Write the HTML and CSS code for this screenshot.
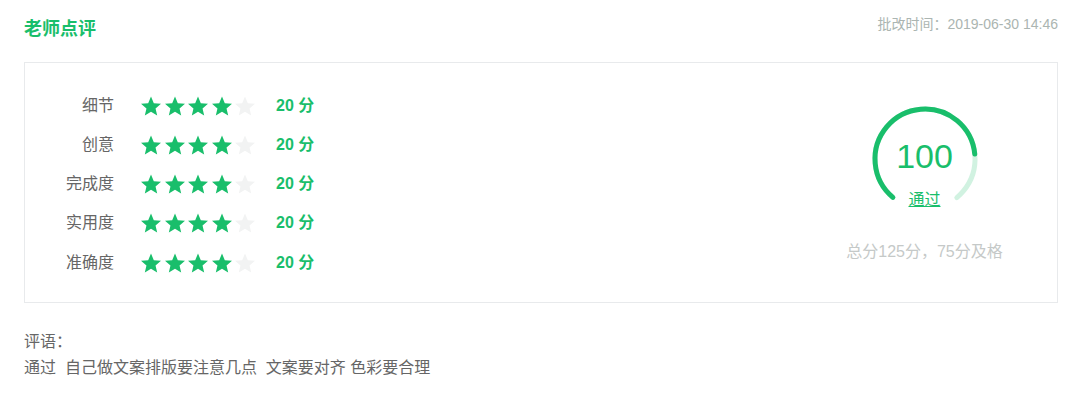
FILE: index.html
```html
<!DOCTYPE html>
<html lang="zh-CN">
<head>
<meta charset="utf-8">
<title>老师点评</title>
<link rel="stylesheet" href="styles.css">
</head>
<body>
<div class="page">
  <div class="header">
    <div class="title">老师点评</div>
    <div class="time">批改时间：2019-06-30 14:46</div>
  </div>
  <div class="panel">
    <div class="ratings">
      <div class="row">
        <span class="label">细节</span>
        <span class="stars">
          <svg class="star on" viewBox="2 1.5 20 20"><path d="M12 17.27L18.18 21l-1.64-7.03L22 9.24l-7.19-.61L12 2 9.19 8.63 2 9.24l5.46 4.73L5.82 21z"/></svg>
          <svg class="star on" viewBox="2 1.5 20 20"><path d="M12 17.27L18.18 21l-1.64-7.03L22 9.24l-7.19-.61L12 2 9.19 8.63 2 9.24l5.46 4.73L5.82 21z"/></svg>
          <svg class="star on" viewBox="2 1.5 20 20"><path d="M12 17.27L18.18 21l-1.64-7.03L22 9.24l-7.19-.61L12 2 9.19 8.63 2 9.24l5.46 4.73L5.82 21z"/></svg>
          <svg class="star on" viewBox="2 1.5 20 20"><path d="M12 17.27L18.18 21l-1.64-7.03L22 9.24l-7.19-.61L12 2 9.19 8.63 2 9.24l5.46 4.73L5.82 21z"/></svg>
          <svg class="star off" viewBox="2 1.5 20 20"><path d="M12 17.27L18.18 21l-1.64-7.03L22 9.24l-7.19-.61L12 2 9.19 8.63 2 9.24l5.46 4.73L5.82 21z"/></svg>
        </span>
        <span class="score">20 分</span>
      </div>
      <div class="row">
        <span class="label">创意</span>
        <span class="stars">
          <svg class="star on" viewBox="2 1.5 20 20"><path d="M12 17.27L18.18 21l-1.64-7.03L22 9.24l-7.19-.61L12 2 9.19 8.63 2 9.24l5.46 4.73L5.82 21z"/></svg>
          <svg class="star on" viewBox="2 1.5 20 20"><path d="M12 17.27L18.18 21l-1.64-7.03L22 9.24l-7.19-.61L12 2 9.19 8.63 2 9.24l5.46 4.73L5.82 21z"/></svg>
          <svg class="star on" viewBox="2 1.5 20 20"><path d="M12 17.27L18.18 21l-1.64-7.03L22 9.24l-7.19-.61L12 2 9.19 8.63 2 9.24l5.46 4.73L5.82 21z"/></svg>
          <svg class="star on" viewBox="2 1.5 20 20"><path d="M12 17.27L18.18 21l-1.64-7.03L22 9.24l-7.19-.61L12 2 9.19 8.63 2 9.24l5.46 4.73L5.82 21z"/></svg>
          <svg class="star off" viewBox="2 1.5 20 20"><path d="M12 17.27L18.18 21l-1.64-7.03L22 9.24l-7.19-.61L12 2 9.19 8.63 2 9.24l5.46 4.73L5.82 21z"/></svg>
        </span>
        <span class="score">20 分</span>
      </div>
      <div class="row">
        <span class="label">完成度</span>
        <span class="stars">
          <svg class="star on" viewBox="2 1.5 20 20"><path d="M12 17.27L18.18 21l-1.64-7.03L22 9.24l-7.19-.61L12 2 9.19 8.63 2 9.24l5.46 4.73L5.82 21z"/></svg>
          <svg class="star on" viewBox="2 1.5 20 20"><path d="M12 17.27L18.18 21l-1.64-7.03L22 9.24l-7.19-.61L12 2 9.19 8.63 2 9.24l5.46 4.73L5.82 21z"/></svg>
          <svg class="star on" viewBox="2 1.5 20 20"><path d="M12 17.27L18.18 21l-1.64-7.03L22 9.24l-7.19-.61L12 2 9.19 8.63 2 9.24l5.46 4.73L5.82 21z"/></svg>
          <svg class="star on" viewBox="2 1.5 20 20"><path d="M12 17.27L18.18 21l-1.64-7.03L22 9.24l-7.19-.61L12 2 9.19 8.63 2 9.24l5.46 4.73L5.82 21z"/></svg>
          <svg class="star off" viewBox="2 1.5 20 20"><path d="M12 17.27L18.18 21l-1.64-7.03L22 9.24l-7.19-.61L12 2 9.19 8.63 2 9.24l5.46 4.73L5.82 21z"/></svg>
        </span>
        <span class="score">20 分</span>
      </div>
      <div class="row">
        <span class="label">实用度</span>
        <span class="stars">
          <svg class="star on" viewBox="2 1.5 20 20"><path d="M12 17.27L18.18 21l-1.64-7.03L22 9.24l-7.19-.61L12 2 9.19 8.63 2 9.24l5.46 4.73L5.82 21z"/></svg>
          <svg class="star on" viewBox="2 1.5 20 20"><path d="M12 17.27L18.18 21l-1.64-7.03L22 9.24l-7.19-.61L12 2 9.19 8.63 2 9.24l5.46 4.73L5.82 21z"/></svg>
          <svg class="star on" viewBox="2 1.5 20 20"><path d="M12 17.27L18.18 21l-1.64-7.03L22 9.24l-7.19-.61L12 2 9.19 8.63 2 9.24l5.46 4.73L5.82 21z"/></svg>
          <svg class="star on" viewBox="2 1.5 20 20"><path d="M12 17.27L18.18 21l-1.64-7.03L22 9.24l-7.19-.61L12 2 9.19 8.63 2 9.24l5.46 4.73L5.82 21z"/></svg>
          <svg class="star off" viewBox="2 1.5 20 20"><path d="M12 17.27L18.18 21l-1.64-7.03L22 9.24l-7.19-.61L12 2 9.19 8.63 2 9.24l5.46 4.73L5.82 21z"/></svg>
        </span>
        <span class="score">20 分</span>
      </div>
      <div class="row">
        <span class="label">准确度</span>
        <span class="stars">
          <svg class="star on" viewBox="2 1.5 20 20"><path d="M12 17.27L18.18 21l-1.64-7.03L22 9.24l-7.19-.61L12 2 9.19 8.63 2 9.24l5.46 4.73L5.82 21z"/></svg>
          <svg class="star on" viewBox="2 1.5 20 20"><path d="M12 17.27L18.18 21l-1.64-7.03L22 9.24l-7.19-.61L12 2 9.19 8.63 2 9.24l5.46 4.73L5.82 21z"/></svg>
          <svg class="star on" viewBox="2 1.5 20 20"><path d="M12 17.27L18.18 21l-1.64-7.03L22 9.24l-7.19-.61L12 2 9.19 8.63 2 9.24l5.46 4.73L5.82 21z"/></svg>
          <svg class="star on" viewBox="2 1.5 20 20"><path d="M12 17.27L18.18 21l-1.64-7.03L22 9.24l-7.19-.61L12 2 9.19 8.63 2 9.24l5.46 4.73L5.82 21z"/></svg>
          <svg class="star off" viewBox="2 1.5 20 20"><path d="M12 17.27L18.18 21l-1.64-7.03L22 9.24l-7.19-.61L12 2 9.19 8.63 2 9.24l5.46 4.73L5.82 21z"/></svg>
        </span>
        <span class="score">20 分</span>
      </div>
    </div>
    <div class="result">
      <div class="gauge">
        <svg class="gauge-svg" width="110" height="110" viewBox="0 0 110 110">
          <circle class="track" cx="55" cy="55" r="50" stroke-dasharray="244.35 314.16" transform="rotate(130 55 55)"/>
          <circle class="bar" cx="55" cy="55" r="50" stroke-dasharray="195.48 314.16" transform="rotate(130 55 55)"/>
        </svg>
        <div class="gauge-value">100</div>
        <div class="gauge-label">通过</div>
      </div>
      <div class="total">总分125分，75分及格</div>
    </div>
  </div>
  <div class="comment">
    <div>评语：</div>
    <div>通过&nbsp;&nbsp;自己做文案排版要注意几点&nbsp;&nbsp;文案要对齐 色彩要合理</div>
  </div>
</div>
</body>
</html>
```
FILE: styles.css
```css
* { box-sizing: border-box; }
html, body { margin: 0; padding: 0; background: #fff; }
body {
  font-family: "Liberation Sans", "Noto Sans CJK SC", sans-serif;
  color: #666;
}
.page {
  padding: 14px 30px 0 24px;
}
.header {
  display: flex;
  justify-content: space-between;
  align-items: flex-start;
}
.title {
  margin-top: 4px;
  font-size: 18px;
  line-height: 22px;
  font-weight: bold;
  color: #19be6b;
}
.time {
  font-size: 14px;
  line-height: 20px;
  color: #abb5b1;
}
.panel {
  margin-top: 22px;
  height: 241px;
  border: 1px solid #e8eaec;
  display: flex;
  justify-content: space-between;
}
.ratings {
  padding: 23px 0 0 25px;
  display: flex;
  flex-direction: column;
}
.row {
  height: 39.25px;
  display: flex;
  align-items: center;
}
.label {
  width: 64px;
  text-align: right;
  font-size: 16px;
  line-height: 20px;
  color: #666;
}
.stars {
  margin-left: 27px;
  display: flex;
  gap: 3.5px;
}
.star {
  width: 20px;
  height: 20px;
  display: block;
}
.star.on { fill: #19be6b; }
.star.off { fill: #f2f3f3; }
.score {
  margin-left: 21px;
  font-size: 16px;
  line-height: 20px;
  font-weight: bold;
  color: #19be6b;
}
.result {
  width: 265px;
  padding-top: 41px;
  display: flex;
  flex-direction: column;
  align-items: center;
}
.gauge {
  position: relative;
  width: 110px;
  height: 110px;
}
.gauge-svg { display: block; }
.gauge-svg circle {
  fill: none;
  stroke-width: 5;
  stroke-linecap: round;
}
.gauge-svg .track { stroke: #d1f2e1; }
.gauge-svg .bar { stroke: #19be6b; }
.gauge-value {
  position: absolute;
  top: 34.5px;
  left: 0;
  right: 0;
  text-align: center;
  font-size: 34px;
  line-height: 34px;
  color: #19be6b;
}
.gauge-label {
  position: absolute;
  top: 84.5px;
  left: 0;
  right: 0;
  text-align: center;
  font-size: 16px;
  line-height: 22px;
  color: #19be6b;
  text-decoration: underline;
}
.total {
  margin-top: 26px;
  font-size: 16px;
  line-height: 24px;
  color: #c5c9c8;
}
.comment {
  margin-top: 26px;
  font-size: 16px;
  line-height: 26px;
  color: #666;
}
```
